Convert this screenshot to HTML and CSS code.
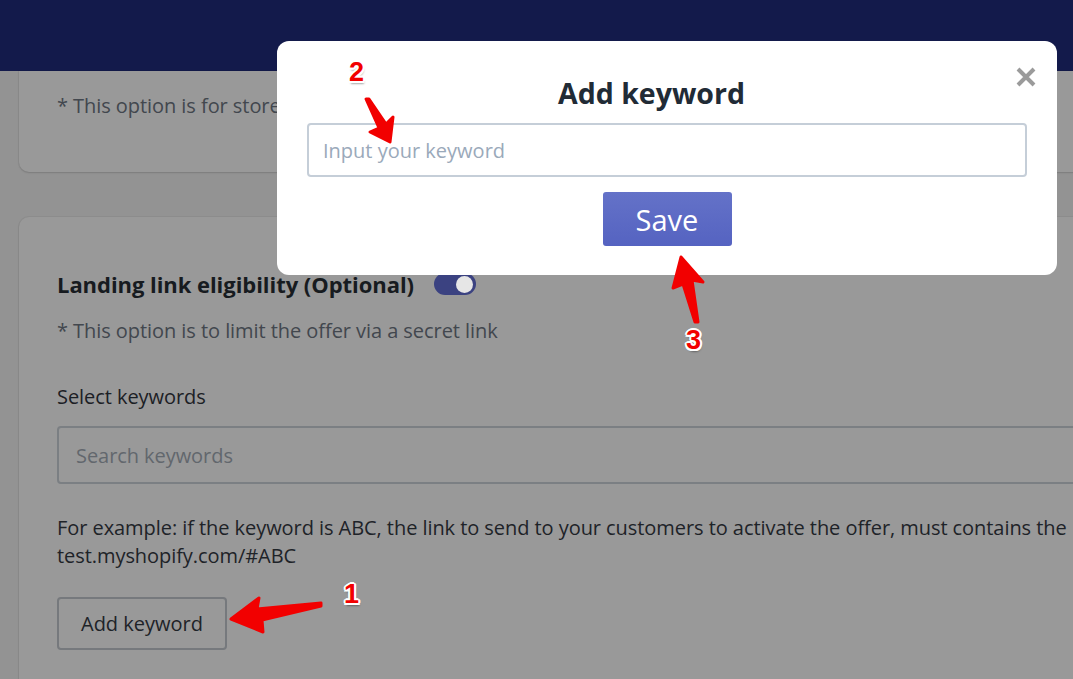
FILE: index.html
```html
<!DOCTYPE html>
<html lang="en">
<head>
<meta charset="utf-8">
<title>Add keyword</title>
<link rel="stylesheet" href="styles.css">
</head>
<body>
<header class="topbar"></header>
<main class="page">
  <section class="card card-top">
    <p class="note">* This option is for store customers with specific tags</p>
  </section>
  <section class="card card-main">
    <div class="title-row">
      <h2 class="card-title">Landing link eligibility (Optional)</h2>
      <span class="toggle"><span class="knob"></span></span>
    </div>
    <p class="note">* This option is to limit the offer via a secret link</p>
    <div class="field-label">Select keywords</div>
    <div class="search">Search keywords</div>
    <p class="example">For example: if the keyword is ABC, the link to send to your customers to activate the offer, must contains the<br>test.myshopify.com/#ABC</p>
    <button class="btn-outline">Add keyword</button>
  </section>
</main>

<div class="modal">
  <div class="modal-head">
    <h1 class="modal-title">Add keyword</h1>
    <svg class="close" width="22" height="22" viewBox="0 0 22 22"><path d="M3 3 L19 19 M19 3 L3 19" stroke="#9b9b9b" stroke-width="4" stroke-linecap="butt"/></svg>
  </div>
  <div class="modal-input">Input your keyword</div>
  <div class="modal-actions"><button class="btn-save">Save</button></div>
</div>

<svg class="arrows" width="1073" height="679" viewBox="0 0 1073 679">
  <g fill="#f20000" stroke="#f20000" stroke-width="3" stroke-linejoin="round" stroke-linecap="round">
    <polygon points="231,619 259,598 257,609 321,603 321,606 262,620 263,632"/>
    <polygon points="390,142 370,132 379,128 366,99 369,99 386,124 393,117"/>
    <polygon points="681,257 703,282 692,280 698,322 695,322 683,284 673,288"/>
  </g>
</svg>
<span class="num num-1">1</span>
<span class="num num-2">2</span>
<span class="num num-3">3</span>
</body>
</html>
```
FILE: styles.css
```css
html, body {
  margin: 0;
  padding: 0;
}
body {
  width: 1073px;
  height: 679px;
  overflow: hidden;
  background: #939393;
  font-family: "Open Sans", "Noto Sans", sans-serif;
  position: relative;
}
.topbar {
  height: 71px;
  background: #131a4b;
}
.page {
  padding-left: 19px;
  display: flex;
  flex-direction: column;
  gap: 45px;
}
.card {
  width: 1130px;
  box-sizing: border-box;
  background: #999999;
  border-radius: 10px;
  padding: 0 38px;
  box-shadow: 0 0 0 1px rgba(0,0,0,0.04), 0 1px 2px rgba(0,0,0,0.12);
}
.card-top {
  border-radius: 0 0 10px 10px;
  padding-top: 21px;
  padding-bottom: 52px;
}
.card-main {
  padding-top: 53px;
  padding-bottom: 60px;
}
.note {
  margin: 0;
  font-size: 20px;
  letter-spacing: -0.06px;
  line-height: 28px;
  color: #42474e;
  white-space: nowrap;
}
.title-row {
  display: flex;
  align-items: center;
  gap: 20px;
  height: 28px;
  margin-bottom: 19px;
}
.card-title {
  margin: 0;
  font-size: 22px;
  letter-spacing: -0.05px;
  line-height: 28px;
  font-weight: 700;
  color: #171b20;
}
.toggle {
  width: 42px;
  height: 22px;
  border-radius: 11px;
  background: #3b4281;
  display: flex;
  align-items: center;
  justify-content: flex-end;
  padding: 0 3px;
  box-sizing: border-box;
}
.knob {
  width: 17px;
  height: 17px;
  border-radius: 50%;
  background: #e6e6e6;
}
.field-label {
  margin-top: 38px;
  font-size: 20px;
  letter-spacing: -0.06px;
  line-height: 28px;
  color: #1c2025;
}
.search {
  margin-top: 15px;
  height: 58px;
  box-sizing: border-box;
  border: 2px solid #7b7f83;
  border-radius: 4px;
  padding-left: 17px;
  display: flex;
  align-items: center;
  font-size: 20px;
  letter-spacing: -0.06px;
  color: #62676d;
}
.example {
  margin: 30px 0 0;
  font-size: 20px;
  letter-spacing: -0.06px;
  line-height: 28px;
  color: #1e2328;
  white-space: nowrap;
}
.btn-outline {
  margin-top: 27px;
  width: 170px;
  height: 53px;
  background: transparent;
  border: 2px solid #76797d;
  border-radius: 4px;
  font-family: inherit;
  font-size: 20px;
  color: #1e2328;
  padding: 0;
}

.modal {
  position: absolute;
  left: 277px;
  top: 41px;
  width: 780px;
  height: 234px;
  box-sizing: border-box;
  background: #ffffff;
  border-radius: 12px;
  padding: 34px 30px 0;
}
.modal-head {
  position: relative;
  height: 36px;
  display: flex;
  justify-content: center;
  padding-right: 31px;
}
.modal-title {
  margin: 0;
  font-size: 28.5px;
  line-height: 36px;
  font-weight: 700;
  color: #212b36;
}
.close {
  position: absolute;
  right: -10px;
  top: -9px;
}
.modal-input {
  margin-top: 12px;
  height: 54px;
  box-sizing: border-box;
  border: 2px solid #c5ced8;
  border-radius: 4px;
  padding-left: 14px;
  display: flex;
  align-items: center;
  font-size: 20px;
  color: #9aa9ba;
}
.modal-actions {
  margin-top: 15px;
  display: flex;
  justify-content: center;
}
.btn-save {
  width: 129px;
  height: 54px;
  border: none;
  border-radius: 3px;
  background: linear-gradient(#6472c8, #5563c1);
  color: #ffffff;
  font-family: inherit;
  font-size: 29px;
  padding: 0;
}

.arrows {
  position: absolute;
  left: 0;
  top: 0;
  pointer-events: none;
}
.num {
  position: absolute;
  font-family: "Liberation Sans", Arial, sans-serif;
  font-weight: 700;
  font-size: 27px;
  line-height: 1;
  color: #f20000;
  text-shadow:
    -2px 0 0 #fff, 2px 0 0 #fff, 0 -2px 0 #fff, 0 2px 0 #fff,
    -1.5px -1.5px 0 #fff, 1.5px -1.5px 0 #fff, -1.5px 1.5px 0 #fff, 1.5px 1.5px 0 #fff,
    1px 3px 2px rgba(0,0,0,0.35);
}
.num-1 { left: 344px; top: 581px; }
.num-2 { left: 349px; top: 59px; }
.num-3 { left: 686px; top: 327px; }
```
